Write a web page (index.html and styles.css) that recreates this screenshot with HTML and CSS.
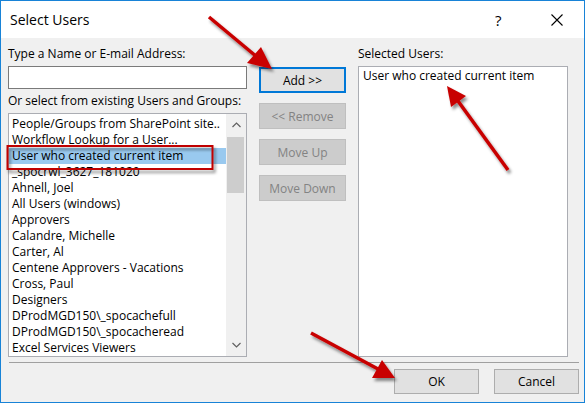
FILE: index.html
```html
<!DOCTYPE html>
<html>
<head>
    <title>Select Users</title>
    <link rel="stylesheet" href="styles.css">
</head>
<body>
    <div class="screen">
        <div class="dialog">
            <div class="titlebar">
                <span class="title">Select Users</span>
                <span class="help">?</span>
                <span class="close">
                    <svg width="12" height="12" viewBox="0 0 12 12">
                        <path d="M0.5 0.5 L11.5 11.5 M11.5 0.5 L0.5 11.5" stroke="#000" stroke-width="1.1" fill="none"/>
                    </svg>
                </span>
            </div>

            <div class="content">
                <div class="panes">
                    <div class="pane pane-left">
                        <label for="name">Type a Name or E-mail Address:</label>
                        <input type="text" id="name" class="name-input">
                        <label>Or select from existing Users and Groups:</label>
                        <div class="listbox">
                            <ul class="items">
                                <li>People/Groups from SharePoint site..</li>
                                <li>Workflow Lookup for a User...</li>
                                <li class="selected">User who created current item</li>
                                <li>_spocrwl_3627_181020</li>
                                <li>Ahnell, Joel</li>
                                <li>All Users (windows)</li>
                                <li>Approvers</li>
                                <li>Calandre, Michelle</li>
                                <li>Carter, Al</li>
                                <li>Centene Approvers - Vacations</li>
                                <li>Cross, Paul</li>
                                <li>Designers</li>
                                <li>DProdMGD150\_spocachefull</li>
                                <li>DProdMGD150\_spocacheread</li>
                                <li>Excel Services Viewers</li>
                            </ul>
                            <div class="scrollbar">
                                <span class="scroll-btn">
                                    <svg width="9" height="6" viewBox="0 0 9 6"><path d="M0.5 5 L4.5 1 L8.5 5" stroke="#606060" stroke-width="1.2" fill="none"/></svg>
                                </span>
                                <div class="track"><div class="thumb"></div></div>
                                <span class="scroll-btn">
                                    <svg width="9" height="6" viewBox="0 0 9 6"><path d="M0.5 1 L4.5 5 L8.5 1" stroke="#606060" stroke-width="1.2" fill="none"/></svg>
                                </span>
                            </div>
                        </div>
                    </div>

                    <div class="actions">
                        <button class="btn btn-focused">Add &gt;&gt;</button>
                        <button class="btn" disabled>&lt;&lt; Remove</button>
                        <button class="btn" disabled>Move Up</button>
                        <button class="btn" disabled>Move Down</button>
                    </div>

                    <div class="pane pane-right">
                        <label>Selected Users:</label>
                        <div class="selected-box">User who created current item</div>
                    </div>
                </div>

                <div class="separator"></div>

                <div class="footer">
                    <button class="btn btn-footer">OK</button>
                    <button class="btn btn-footer">Cancel</button>
                </div>
            </div>
        </div>

        <!-- red callouts drawn on top of the dialog -->
        <svg class="callouts" width="587" height="405" viewBox="0 0 587 405">
            <defs>
                <filter id="shade" x="-20%" y="-20%" width="150%" height="150%">
                    <feDropShadow dx="2" dy="3" stdDeviation="1.6" flood-color="#000" flood-opacity="0.45"/>
                </filter>
            </defs>
            <g filter="url(#shade)">
                <rect x="7.5" y="146" width="205" height="23" fill="none" stroke="#c00000" stroke-width="2"/>
            </g>
            <g filter="url(#shade)" fill="#c80000" stroke="#c80000">
                <line x1="209" y1="17" x2="257" y2="57" stroke-width="3.5"/>
                <polygon points="272,69 247,63 261,47" stroke="none"/>

                <line x1="508" y1="170" x2="458" y2="101" stroke-width="3.5"/>
                <polygon points="447,86 466,96 451,107" stroke="none"/>

                <line x1="311" y1="333" x2="378" y2="369" stroke-width="3.5"/>
                <polygon points="395,378 372,378 382,360" stroke="none"/>
            </g>
        </svg>
    </div>
</body>
</html>
```

FILE: styles.css
```css
body {
    margin: 0;
    background: #ffffff;
    font-family: 'Open Sans', 'Noto Sans', sans-serif;
    font-size: 12px;
    color: #000000;
}

.screen {
    position: relative;
    width: 587px;
    height: 405px;
}

.dialog {
    box-sizing: border-box;
    width: 585px;
    height: 403px;
    border: 1px solid #1883d7;
    display: flex;
    flex-direction: column;
    background-color: #f0f0f0;
}

/* title bar */
.titlebar {
    height: 37px;
    background: #ffffff;
    display: flex;
    align-items: center;
}

.title {
    font-size: 14px;
    padding-left: 9px;
    flex: 1;
}

.help {
    font-size: 15px;
    width: 12px;
    margin-right: 44px;
}

.close {
    display: flex;
    margin-right: 21px;
}

/* main area */
.content {
    flex: 1;
    padding: 8px 5px 0 7px;
    display: flex;
    flex-direction: column;
}

.panes {
    display: flex;
    height: 311px;
}

.pane {
    display: flex;
    flex-direction: column;
}

.pane label {
    display: block;
    height: 16px;
    line-height: 16px;
    margin-bottom: 4px;
    white-space: nowrap;
}

.pane-left {
    width: 239px;
}

.name-input {
    box-sizing: border-box;
    height: 23px;
    margin: 0 0 4px 0;
    border: 1px solid #7a7a7a;
    background: #ffffff;
    padding: 0 3px;
    font: inherit;
}

.listbox {
    flex: 1;
    box-sizing: border-box;
    border: 1px solid #abadb3;
    background: #ffffff;
    display: flex;
    overflow: hidden;
}

.items {
    list-style: none;
    margin: 0;
    padding: 2px 0 0 0;
    flex: 1;
    overflow: hidden;
}

.items li {
    height: 16px;
    line-height: 16px;
    padding-left: 3px;
    white-space: nowrap;
}

.items li.selected {
    background-color: #99c9ef;
}

.scrollbar {
    width: 20px;
    background: #f0f0f0;
    display: flex;
    flex-direction: column;
}

.scroll-btn {
    height: 22px;
    display: flex;
    align-items: center;
    justify-content: center;
}

.track {
    flex: 1;
    padding: 1px 2px 0 1px;
}

.thumb {
    height: 56px;
    background: #cdcdcd;
}

/* middle buttons */
.actions {
    display: flex;
    flex-direction: column;
    gap: 10px;
    margin: 21px 12px 0 12px;
}

.btn {
    box-sizing: border-box;
    width: 87px;
    height: 26px;
    background: #e1e1e1;
    border: 1px solid #adadad;
    font: inherit;
    color: #000000;
    padding: 0;
}

.btn-focused {
    border: 2px solid #0078d7;
}

.btn:disabled {
    background: #cccccc;
    border-color: #bfbfbf;
    color: #838383;
}

.pane-right {
    width: 210px;
}

.selected-box {
    flex: 1;
    box-sizing: border-box;
    border: 1px solid #abadb3;
    background: #ffffff;
    padding: 1px 4px;
    line-height: 16px;
}

.separator {
    margin: 5px 0 0 1px;
    border-top: 1px solid #a0a0a0;
}

.footer {
    display: flex;
    justify-content: flex-end;
    gap: 15px;
    margin-top: 6px;
}

.btn-footer {
    width: 85px;
    height: 25px;
}

.callouts {
    position: absolute;
    top: 0;
    left: 0;
    pointer-events: none;
}
```
